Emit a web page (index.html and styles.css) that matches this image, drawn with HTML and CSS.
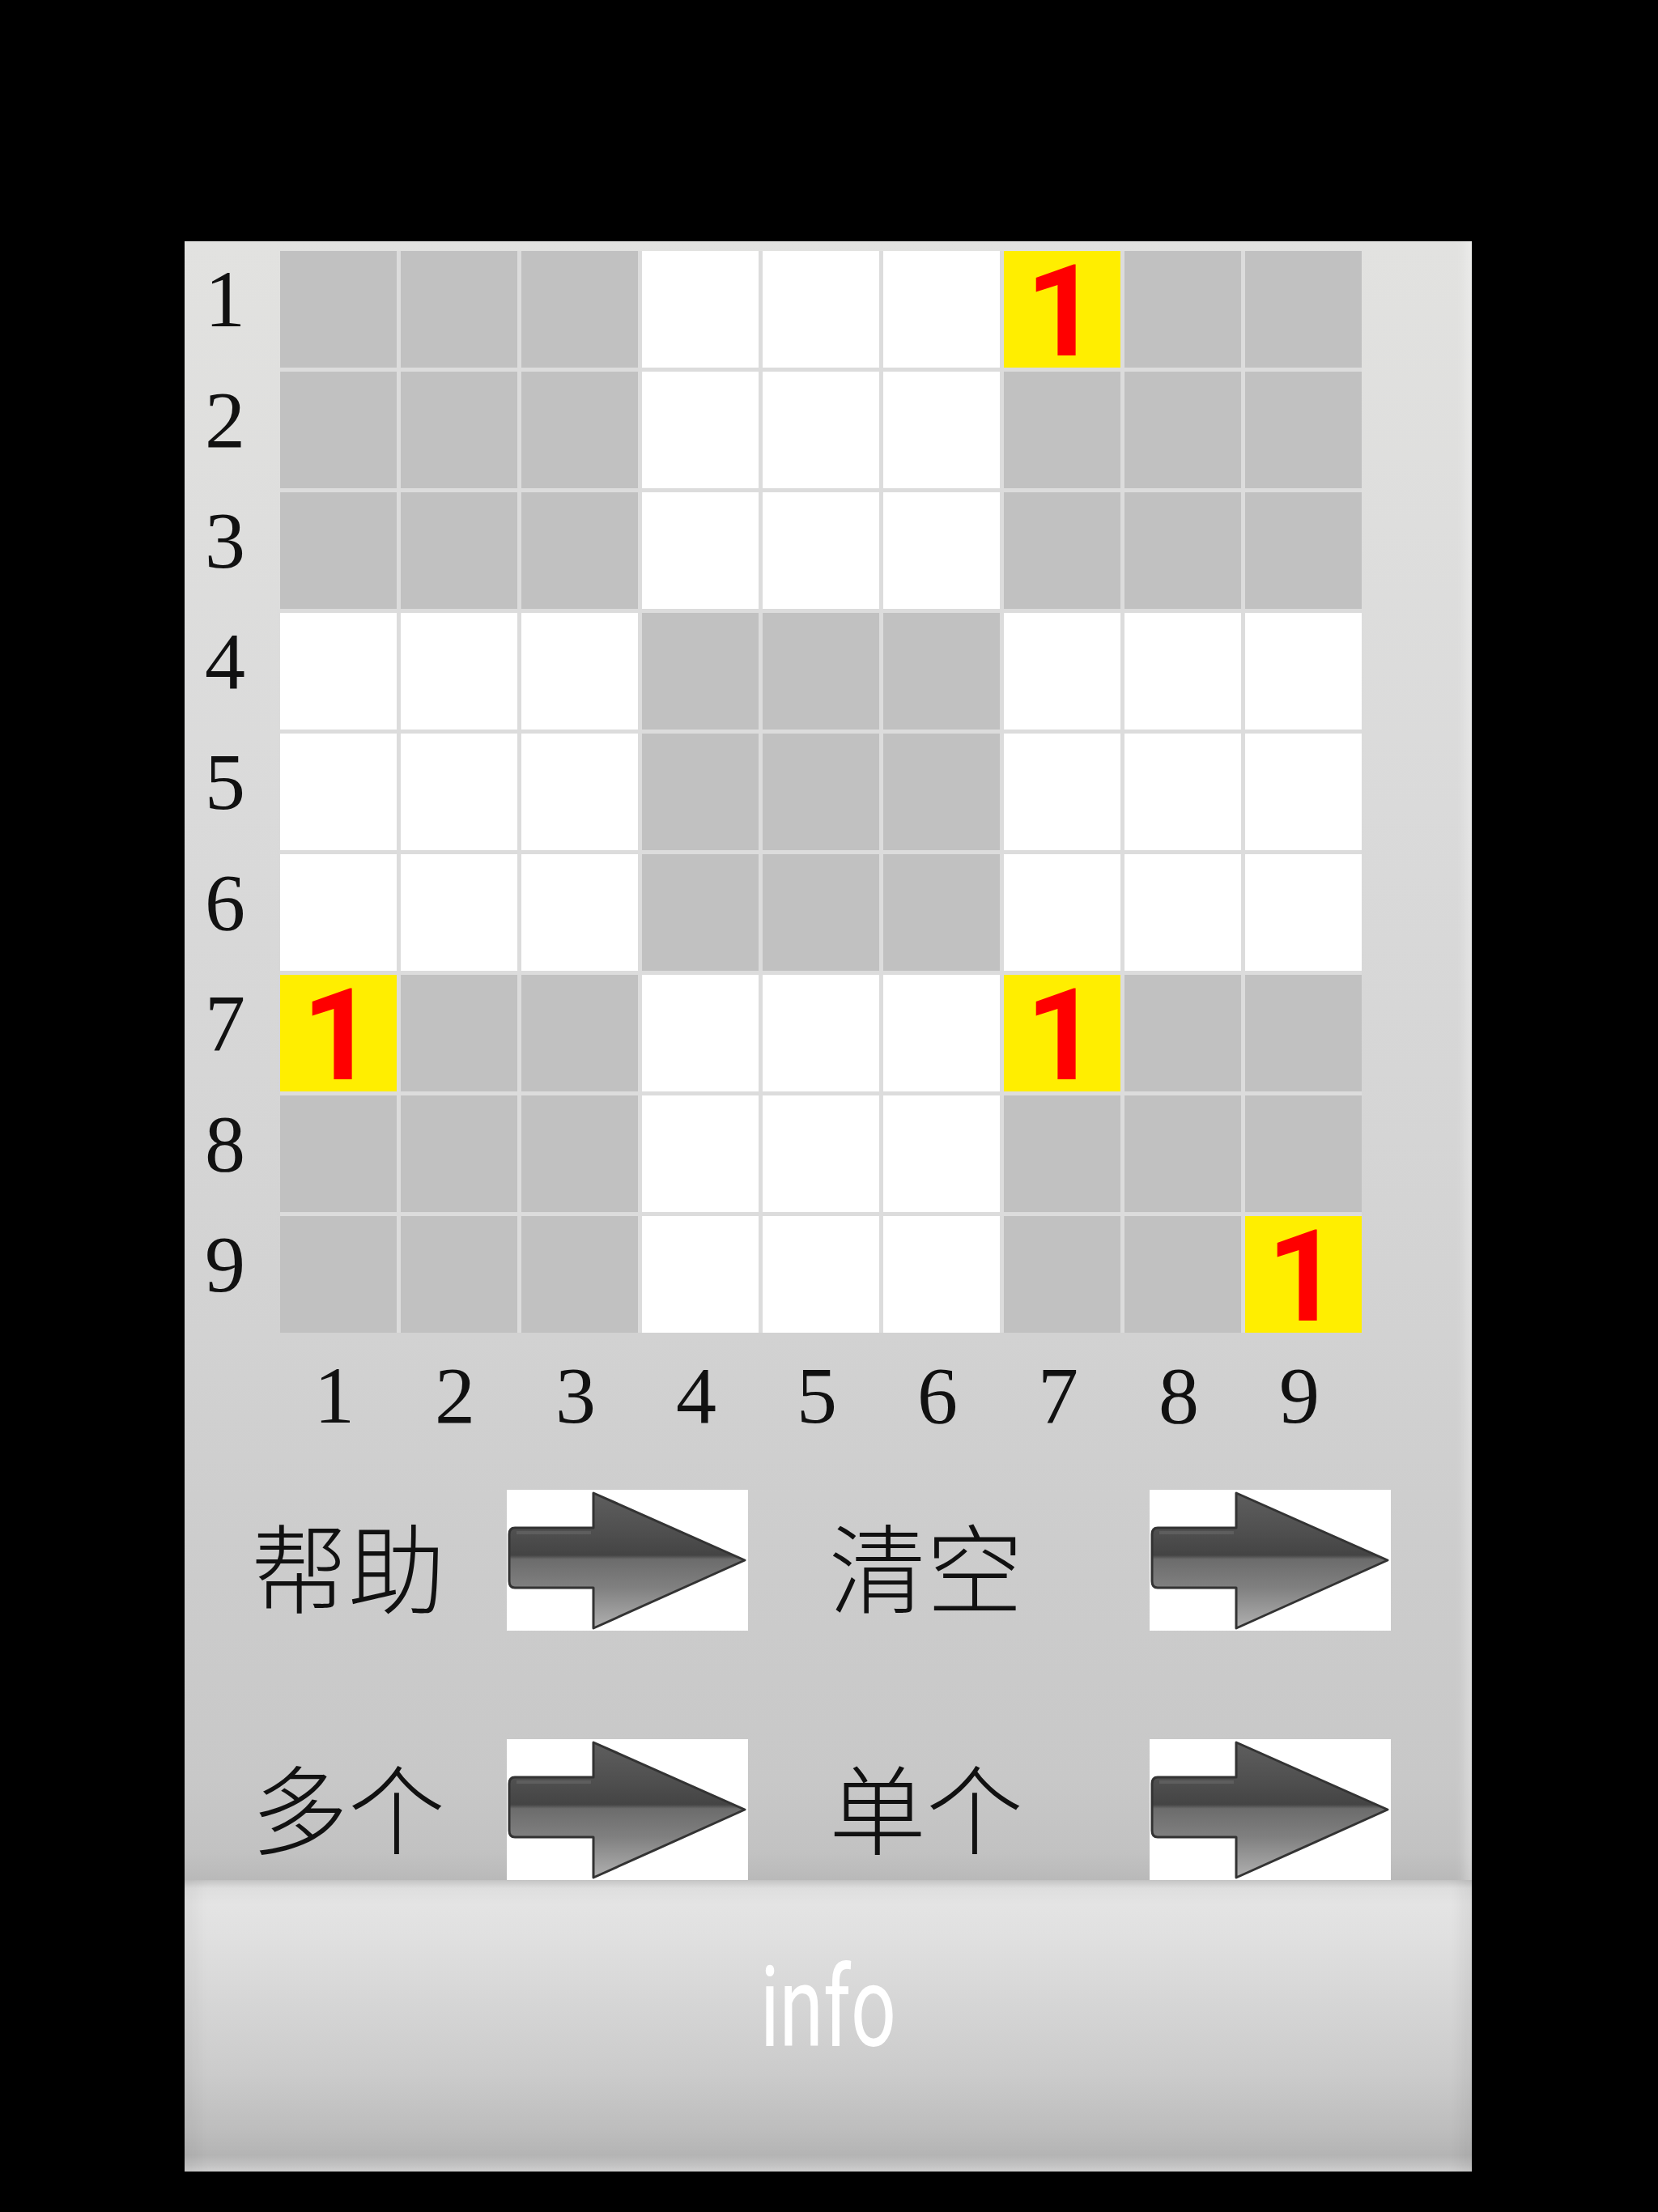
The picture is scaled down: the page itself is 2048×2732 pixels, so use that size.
FILE: index.html
```html
<!DOCTYPE html>
<html lang="zh">
<head>
<meta charset="utf-8">
<title>Puzzle</title>
<link rel="stylesheet" href="styles.css">
</head>
<body>
<div class="screen">
  <div class="panel">
    <div class="board">
      <div class="row-labels">
        <div class="rl">1</div><div class="rl">2</div><div class="rl">3</div>
        <div class="rl">4</div><div class="rl">5</div><div class="rl">6</div>
        <div class="rl">7</div><div class="rl">8</div><div class="rl">9</div>
      </div>
      <div class="grid">
        <div class="c g"></div><div class="c g"></div><div class="c g"></div><div class="c w"></div><div class="c w"></div><div class="c w"></div><div class="c y"><span class="num">1</span></div><div class="c g"></div><div class="c g"></div>
        <div class="c g"></div><div class="c g"></div><div class="c g"></div><div class="c w"></div><div class="c w"></div><div class="c w"></div><div class="c g"></div><div class="c g"></div><div class="c g"></div>
        <div class="c g"></div><div class="c g"></div><div class="c g"></div><div class="c w"></div><div class="c w"></div><div class="c w"></div><div class="c g"></div><div class="c g"></div><div class="c g"></div>
        <div class="c w"></div><div class="c w"></div><div class="c w"></div><div class="c g"></div><div class="c g"></div><div class="c g"></div><div class="c w"></div><div class="c w"></div><div class="c w"></div>
        <div class="c w"></div><div class="c w"></div><div class="c w"></div><div class="c g"></div><div class="c g"></div><div class="c g"></div><div class="c w"></div><div class="c w"></div><div class="c w"></div>
        <div class="c w"></div><div class="c w"></div><div class="c w"></div><div class="c g"></div><div class="c g"></div><div class="c g"></div><div class="c w"></div><div class="c w"></div><div class="c w"></div>
        <div class="c y"><span class="num">1</span></div><div class="c g"></div><div class="c g"></div><div class="c w"></div><div class="c w"></div><div class="c w"></div><div class="c y"><span class="num">1</span></div><div class="c g"></div><div class="c g"></div>
        <div class="c g"></div><div class="c g"></div><div class="c g"></div><div class="c w"></div><div class="c w"></div><div class="c w"></div><div class="c g"></div><div class="c g"></div><div class="c g"></div>
        <div class="c g"></div><div class="c g"></div><div class="c g"></div><div class="c w"></div><div class="c w"></div><div class="c w"></div><div class="c g"></div><div class="c g"></div><div class="c y"><span class="num">1</span></div>
      </div>
    </div>
    <div class="col-labels">
      <div class="cl">1</div><div class="cl">2</div><div class="cl">3</div>
      <div class="cl">4</div><div class="cl">5</div><div class="cl">6</div>
      <div class="cl">7</div><div class="cl">8</div><div class="cl">9</div>
    </div>
    <div class="buttons">
      <div class="btn-row first">
        <span class="btn-label label-a">帮助</span>
        <svg class="arrow" viewBox="0 0 298 174" width="298" height="174">
          <defs>
            <linearGradient id="ag1" x1="0" y1="0" x2="0" y2="1">
              <stop offset="0" stop-color="#5e5e5e"/>
              <stop offset="0.27" stop-color="#505050"/>
              <stop offset="0.46" stop-color="#444444"/>
              <stop offset="0.49" stop-color="#6c6c6c"/>
              <stop offset="0.7" stop-color="#808080"/>
              <stop offset="1" stop-color="#b0b0b0"/>
            </linearGradient>
          </defs>
          <rect width="298" height="174" fill="#fff"/>
          <path d="M10 47 L107 47 L107 4 L294 87 L107 171 L107 121 L10 121 Q3 121 3 113 L3 55 Q3 47 10 47 Z" fill="url(#ag1)" stroke="#333" stroke-width="3" stroke-linejoin="round"/>
          <path d="M12 53 L104 53" stroke="#6e6e6e" stroke-width="4" opacity="0.5"/>
        </svg>
        <span class="btn-label label-b">清空</span>
        <svg class="arrow" viewBox="0 0 298 174" width="298" height="174">
          <defs>
            <linearGradient id="ag2" x1="0" y1="0" x2="0" y2="1">
              <stop offset="0" stop-color="#5e5e5e"/>
              <stop offset="0.27" stop-color="#505050"/>
              <stop offset="0.46" stop-color="#444444"/>
              <stop offset="0.49" stop-color="#6c6c6c"/>
              <stop offset="0.7" stop-color="#808080"/>
              <stop offset="1" stop-color="#b0b0b0"/>
            </linearGradient>
          </defs>
          <rect width="298" height="174" fill="#fff"/>
          <path d="M10 47 L107 47 L107 4 L294 87 L107 171 L107 121 L10 121 Q3 121 3 113 L3 55 Q3 47 10 47 Z" fill="url(#ag2)" stroke="#333" stroke-width="3" stroke-linejoin="round"/>
          <path d="M12 53 L104 53" stroke="#6e6e6e" stroke-width="4" opacity="0.5"/>
        </svg>
      </div>
      <div class="btn-row second">
        <span class="btn-label label-a">多个</span>
        <svg class="arrow" viewBox="0 0 298 174" width="298" height="174">
          <defs>
            <linearGradient id="ag3" x1="0" y1="0" x2="0" y2="1">
              <stop offset="0" stop-color="#5e5e5e"/>
              <stop offset="0.27" stop-color="#505050"/>
              <stop offset="0.46" stop-color="#444444"/>
              <stop offset="0.49" stop-color="#6c6c6c"/>
              <stop offset="0.7" stop-color="#808080"/>
              <stop offset="1" stop-color="#b0b0b0"/>
            </linearGradient>
          </defs>
          <rect width="298" height="174" fill="#fff"/>
          <path d="M10 47 L107 47 L107 4 L294 87 L107 171 L107 121 L10 121 Q3 121 3 113 L3 55 Q3 47 10 47 Z" fill="url(#ag3)" stroke="#333" stroke-width="3" stroke-linejoin="round"/>
          <path d="M12 53 L104 53" stroke="#6e6e6e" stroke-width="4" opacity="0.5"/>
        </svg>
        <span class="btn-label label-b">单个</span>
        <svg class="arrow" viewBox="0 0 298 174" width="298" height="174">
          <defs>
            <linearGradient id="ag4" x1="0" y1="0" x2="0" y2="1">
              <stop offset="0" stop-color="#5e5e5e"/>
              <stop offset="0.27" stop-color="#505050"/>
              <stop offset="0.46" stop-color="#444444"/>
              <stop offset="0.49" stop-color="#6c6c6c"/>
              <stop offset="0.7" stop-color="#808080"/>
              <stop offset="1" stop-color="#b0b0b0"/>
            </linearGradient>
          </defs>
          <rect width="298" height="174" fill="#fff"/>
          <path d="M10 47 L107 47 L107 4 L294 87 L107 171 L107 121 L10 121 Q3 121 3 113 L3 55 Q3 47 10 47 Z" fill="url(#ag4)" stroke="#333" stroke-width="3" stroke-linejoin="round"/>
          <path d="M12 53 L104 53" stroke="#6e6e6e" stroke-width="4" opacity="0.5"/>
        </svg>
      </div>
    </div>
    <div class="info-bar"><span class="info-text">info</span></div>
  </div>
</div>
</body>
</html>
```

FILE: styles.css
```css
html, body {
  margin: 0;
  padding: 0;
  background: #000;
}

.screen {
  width: 2048px;
  height: 2732px;
  box-sizing: border-box;
  padding: 298px 0 0 228px;
  background: #000;
}

.panel {
  width: 1590px;
  height: 2384px;
  display: flex;
  flex-direction: column;
  background: linear-gradient(to bottom, #e2e2e0 0px, #dadada 700px, #d2d2d2 1350px, #cccccc 1650px, #c8c8c8 1900px, #c2c2c2 1990px, #b9b9b9 2024px);
  box-shadow: inset -16px 0 14px -8px rgba(255, 255, 255, 0.35);
}

.board {
  display: flex;
  padding-top: 12px;
}

.row-labels {
  width: 118px;
  box-sizing: border-box;
  padding-right: 18px;
  display: flex;
  flex-direction: column;
  gap: 5px;
}

.rl, .cl {
  font-family: "Liberation Serif", "DejaVu Serif", serif;
  font-size: 100px;
  color: #111;
  text-align: center;
}

.rl {
  height: 144px;
  line-height: 120px;
}

.grid {
  display: grid;
  grid-template-columns: repeat(9, 144px);
  grid-auto-rows: 144px;
  gap: 5px;
  background: #dcdcdc;
}

.c {
  display: flex;
  align-items: center;
  justify-content: center;
}

.num {
  font-family: Roboto, "Liberation Sans", Arial, sans-serif;
  font-weight: bold;
  font-size: 158px;
  line-height: 144px;
  height: 144px;
  color: #ff0000;
  box-sizing: border-box;
  padding-top: 3px;
}

.g { background: #c1c1c1; }
.w { background: #ffffff; }
.y { background: #ffee00; }

.col-labels {
  display: grid;
  grid-template-columns: repeat(9, 144px);
  column-gap: 5px;
  margin: 18px 0 0 113px;
  height: 120px;
}

.cl {
  line-height: 120px;
}

.buttons {
  margin-top: 56px;
  display: flex;
  flex-direction: column;
  gap: 134px;
}

.btn-row {
  display: flex;
  height: 174px;
  padding-left: 82px;
}

.btn-label {
  font-family: "Noto Sans CJK SC", "Noto Sans CJK TC", sans-serif;
  font-weight: 300;
  font-size: 120px;
  line-height: 164px;
  color: #111;
  box-sizing: border-box;
  height: 174px;
  white-space: nowrap;
}

.first .btn-label { padding-top: 10px; }
.second .btn-label { padding-top: 0; }

.label-a { width: 316px; }
.label-b { width: 396px; margin-left: 100px; }

.arrow {
  display: block;
  width: 298px;
  height: 174px;
  flex: none;
}

.info-bar {
  flex: 1;
  box-sizing: border-box;
  padding-top: 87px;
  text-align: center;
  background: linear-gradient(to bottom, #c4c4c4 0px, #dedede 10px, #e4e4e4 30px, #e0e0e0 70px, #d6d6d6 150px, #cbcbcb 240px, #bdbdbd 310px, #b4b4b4 340px, #c2c2c2 352px, #cfcfcf 360px);
  box-shadow: inset 30px 0 18px -14px rgba(0, 0, 0, 0.04), inset -24px 0 16px -10px rgba(0, 0, 0, 0.05);
}

.info-text {
  display: inline-block;
  font-family: Roboto, "Noto Sans", sans-serif;
  font-size: 140px;
  line-height: 140px;
  color: #ffffff;
  transform: scaleX(0.7);
}
```
